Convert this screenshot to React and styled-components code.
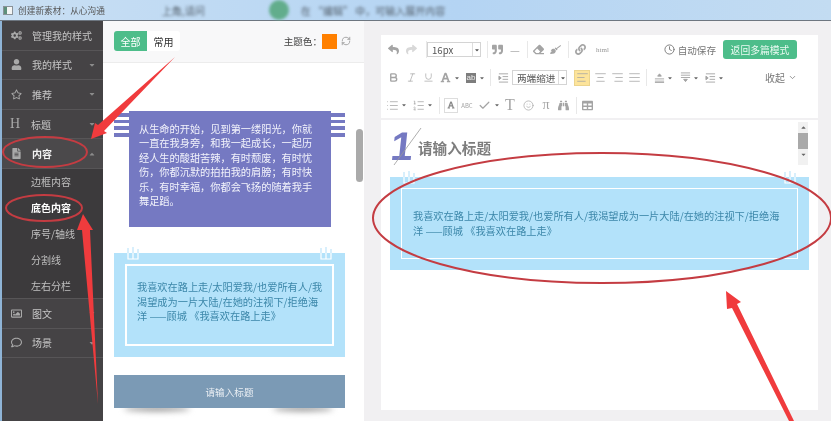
import React from "react";
import styled, { createGlobalStyle } from "styled-components";
import {
  FaCogs, FaUser, FaRegStar, FaFileAlt, FaRegImage, FaRegComment, FaCaretDown, FaCaretUp,
  FaReply, FaShare, FaQuoteRight, FaEraser, FaBroom, FaLink, FaFont, FaBinoculars, FaTable,
} from "react-icons/fa";
import {
  RefreshCw, Clock, ChevronDown, Bold, Italic, Underline, AlignLeft, AlignCenter, AlignRight,
  AlignJustify, List as ListIcon, ListOrdered, Check, Smile,
} from "lucide-react";

const Global = createGlobalStyle`
  html, body { margin: 0; padding: 0; background: #fff; }
  body { font-family: "Noto Sans CJK SC", "Liberation Sans", sans-serif; }
`;

const Page = styled.div`
  position: relative;
  width: 831px;
  height: 421px;
  overflow: hidden;
  display: flex;
  flex-direction: column;
  filter: blur(0.4px);
`;

const TitleBar = styled.div`
  height: 21px;
  box-sizing: border-box;
  flex: none;
  display: flex;
  align-items: center;
  padding-left: 3px;
  background: linear-gradient(90deg, #c9dff3, #b4d4f3 55%, #c3dcf2);
  border-bottom: 1px solid #6d7680;
  font-size: 8.7px;
  color: #555;
`;

const WindowIcon = styled.span`
  width: 8px;
  height: 7px;
  margin-right: 5px;
  background: linear-gradient(90deg, #5d8f7a 35%, #f3f5f5 35%);
  border: 1px solid #8a9299;
`;

const BlurText = styled.span`
  margin-left: ${(p) => p.$left}px;
  color: #54606c;
  font-size: 10px;
  filter: blur(1.4px);
  white-space: nowrap;
`;

const GreenDot = styled.span`
  width: 20px;
  height: 20px;
  margin-left: 64px;
  border-radius: 50%;
  background: #62ad8c;
  filter: blur(1.5px);
`;

const Body = styled.div`
  flex: 1;
  display: flex;
  min-height: 0;
  padding-left: 2px;
  background: #8fb4d6;
`;

const Sidebar = styled.div`
  width: 101px;
  flex: none;
  background: #454345;
  color: #c6c6c6;
  font-size: 10px;
`;

const MenuRow = styled.div`
  height: 29.6px;
  box-sizing: border-box;
  display: flex;
  align-items: center;
  padding-left: 8px;
  border-bottom: 1px solid #575557;
  background: ${(p) => (p.$active ? "#4b494b" : "transparent")};
  color: ${(p) => (p.$active ? "#f2f2f2" : "#c6c6c6")};
  font-weight: ${(p) => (p.$active ? 700 : 400)};
  svg.lead { width: 11px; height: 11px; flex: none; margin: 0 10px 0 1px; color: #a9a9a9; }
  svg.caret { width: 8px; height: 8px; margin-left: auto; margin-right: 7px; color: #8b8b8b; }
`;

const SerifLead = styled.span`
  width: 12px;
  margin-right: 9px;
  flex: none;
  font: 400 14px/14px "Liberation Serif", serif;
  color: #a9a9a9;
`;

const SubMenu = styled.div`
  background: #3c3a3c;
  box-shadow: inset 0 -1px 0 #575557;
`;

const SubRow = styled.div`
  height: 26px;
  display: flex;
  align-items: center;
  padding-left: 29px;
  color: ${(p) => (p.$active ? "#ffffff" : "#c0c0c0")};
  font-weight: ${(p) => (p.$active ? 700 : 400)};
`;

const Middle = styled.div`
  position: relative;
  isolation: isolate;
  width: 261px;
  flex: none;
  background: #fff;
  overflow: hidden;
`;

const MiddleHead = styled.div`
  height: 42px;
  box-sizing: border-box;
  display: flex;
  align-items: center;
  padding: 0 13px 1px 11px;
  background: #f8f8f9;
  border-bottom: 1px solid #ececec;
`;

const Tab = styled.div`
  width: 33px;
  height: 20px;
  display: flex;
  align-items: center;
  justify-content: center;
  font-size: 10px;
  color: ${(p) => (p.$on ? "#fff" : "#333")};
  background: ${(p) => (p.$on ? "#4dbd8a" : "#fff")};
  border-radius: ${(p) => (p.$on ? "3px 0 0 3px" : "0 3px 3px 0")};
`;

const ThemeLabel = styled.span`
  margin-left: auto;
  font-size: 9.6px;
  color: #444;
`;

const Swatch = styled.span`
  width: 15px;
  height: 15px;
  margin: 0 4px 0 0;
  background: #ff8000;
`;

const List = styled.div`
  padding: 48px 19px 0 11px;
  display: flex;
  flex-direction: column;
`;

const RibbonWrap = styled.div`
  position: relative;
  padding: 0 14px 0 15px;
  &::before {
    content: "";
    position: absolute;
    left: 0;
    right: 0;
    top: 2px;
    height: 24px;
    background: repeating-linear-gradient(180deg, #7579c2 0 3.7px, #fff 3.7px 6.7px);
  }
`;

const RibbonCard = styled.div`
  position: relative;
  height: 116px;
  box-sizing: border-box;
  padding: 11px 10px 0;
  background: #7579c2;
  color: #f2f3fb;
  font-size: 10.2px;
  line-height: 14.4px;
`;

const NoteCard = styled.div`
  position: relative;
  height: ${(p) => p.$h}px;
  margin-top: ${(p) => p.$top}px;
  box-sizing: border-box;
  padding: 11px;
  background: #b3e2fa;
`;

const NoteInner = styled.div`
  height: 100%;
  box-sizing: border-box;
  padding: ${(p) => p.$pad};
  border: ${(p) => p.$line}px solid #fff;
  color: #3c87a9;
  font-size: 10.2px;
  line-height: 14.6px;
`;

const Clip = styled.svg`
  position: absolute;
  top: -7px;
  ${(p) => (p.$side === "left" ? "left: 12px;" : "right: 12px;")}
  width: 14px;
  height: 19px;
`;

const TitleStrip = styled.div`
  position: relative;
  height: 33px;
  margin-top: 18px;
  display: flex;
  align-items: center;
  justify-content: center;
  background: #7b9ab5;
  color: #e9eef3;
  font-size: 9.6px;
  &::before, &::after {
    content: "";
    position: absolute;
    bottom: -3px;
    height: 5px;
    background: #8a8a8a;
    border-radius: 50%;
    filter: blur(3px);
    z-index: -1;
  }
  &::before { left: 10px; width: 66px; }
  &::after { right: 12px; width: 60px; }
`;

const ScrollThumb = styled.div`
  position: absolute;
  left: 253px;
  top: 108px;
  width: 7px;
  height: 53px;
  border-radius: 4px;
  background: #aaa;
`;

const Right = styled.div`
  flex: 1;
  min-width: 0;
  padding: 14px 13px 11px 17px;
  background: #f1f0f2;
`;

const Editor = styled.div`
  height: 100%;
  background: #fff;
  display: flex;
  flex-direction: column;
`;

const Toolbar = styled.div`
  height: 85px;
  flex: none;
  padding-top: 1px;
  box-sizing: border-box;
  border-bottom: 2px solid #f1f0f2;
`;

const ToolRow = styled.div`
  height: 27.7px;
  display: flex;
  align-items: center;
  padding-left: 3px;
`;

const Tool = styled.span`
  width: ${(p) => p.$w || 18}px;
  height: 16px;
  flex: none;
  margin-left: ${(p) => p.$ml || 0}px;
  display: flex;
  align-items: center;
  justify-content: center;
  color: ${(p) => (p.$light ? "#d8d8d8" : "#a4a4a4")};
  font-size: ${(p) => p.$size || 10}px;
  font-family: ${(p) => (p.$serif ? '"Liberation Serif", serif' : "inherit")};
  background: ${(p) => (p.$on ? "#fde49b" : "transparent")};
  box-shadow: ${(p) => (p.$on ? "inset 0 0 0 1px #ecd48d" : "none")};
  svg { width: ${(p) => p.$icon || 11}px; height: ${(p) => p.$icon || 11}px; }
`;

const Boxed = styled.span`
  width: 12px;
  height: 13px;
  display: flex;
  align-items: center;
  justify-content: center;
  border: 1px solid #ddd;
  color: #888;
  svg { width: 8px; height: 8px; }
`;

const Filled = styled.span`
  width: 10px;
  height: 10px;
  display: flex;
  align-items: center;
  justify-content: center;
  background: #7d7d7d;
  color: #eee;
  font: 400 8px/10px "Liberation Sans", sans-serif;
`;

const MiniCaret = styled(FaCaretDown)`
  width: 6px;
  height: 6px;
  flex: none;
  margin-left: ${(p) => p.$ml ?? 1}px;
  color: #666;
`;

const Sep = styled.span`
  width: 1px;
  height: 17px;
  flex: none;
  margin: 0 ${(p) => p.$r ?? 4}px 0 ${(p) => p.$l ?? 4}px;
  background: #e8e8e8;
`;

const Select = styled.span`
  width: ${(p) => p.$w}px;
  height: 15px;
  flex: none;
  margin-left: ${(p) => p.$ml || 0}px;
  display: flex;
  align-items: center;
  justify-content: space-between;
  box-sizing: border-box;
  padding-left: 4px;
  border: 1px solid #d4d4d4;
  font-size: 9.6px;
  color: #555;
`;

const SelectArrow = styled.span`
  width: 7px;
  height: 100%;
  display: flex;
  align-items: center;
  justify-content: center;
  border-left: 1px solid #ddd;
  svg { width: 6px; height: 6px; color: #555; }
`;

const Html = styled.span`
  margin-left: 9px;
  font-size: 7px;
  font-family: "Liberation Serif", serif;
  color: #999;
`;

const SaveLabel = styled.span`
  display: flex;
  align-items: center;
  gap: 3px;
  margin-left: auto;
  color: #777;
  font-size: 9.6px;
  svg { width: 11px; height: 11px; }
`;

const BackButton = styled.button`
  width: 74px;
  height: 19px;
  margin: 0 21px 0 7px;
  padding: 0;
  border: 0;
  border-radius: 3px;
  background: #4dbd8a;
  color: #eafaf2;
  font: 400 9.8px "Noto Sans CJK SC", sans-serif;
`;

const Collapse = styled.span`
  display: flex;
  align-items: center;
  gap: 3px;
  margin-left: auto;
  margin-right: 21px;
  font-size: 10px;
  color: #777;
  svg { width: 9px; height: 9px; }
`;

const Content = styled.div`
  position: relative;
  flex: 1;
  min-height: 0;
`;

const HeadingRow = styled.div`
  height: 57px;
  box-sizing: border-box;
  padding: 18px 0 0 37px;
  font-size: 14.6px;
  font-weight: 700;
  line-height: 20px;
  color: #7d7d7d;
`;

const NumberMark = styled.span`
  position: absolute;
  left: 10px;
  top: 6px;
  font: 700 40px/40px "Liberation Sans", sans-serif;
  transform: skewX(-6deg);
  color: #7579c2;
`;

const MarkLine = styled.svg`
  position: absolute;
  left: 12px;
  top: 7px;
  width: 30px;
  height: 39px;
`;

const EditorCard = styled(NoteCard)`
  margin: 0 9px;
`;

const EditorScroll = styled.div`
  position: absolute;
  left: 417px;
  top: 2px;
  width: 10px;
  height: 43px;
  background: #f1f1f1;
  display: flex;
  flex-direction: column;
  align-items: center;
  color: #666;
  svg { width: 7px; height: 7px; flex: none; margin-top: 2px; }
`;

const EditorThumb = styled.div`
  width: 10px;
  height: 16px;
  margin: 2px 0 0;
  background: #a9a9a9;
`;

const Annotations = styled.svg`
  position: absolute;
  left: 0;
  top: 0;
  width: 831px;
  height: 421px;
  pointer-events: none;
`;

const menuTop = [
  { icon: FaCogs, label: "管理我的样式" },
  { icon: FaUser, label: "我的样式", caret: true },
  { icon: FaRegStar, label: "推荐", caret: true },
  { label: "标题", caret: true, serif: "H" },
];

const menuSub = ["边框内容", "底色内容", "序号/轴线", "分割线", "左右分栏"];

const menuBottom = [
  { icon: FaRegImage, label: "图文" },
  { icon: FaRegComment, label: "场景" },
];

const poem = "我喜欢在路上走/太阳爱我/也爱所有人/我渴望成为一片大陆/在她的注视下/拒绝海洋 ——顾城 《我喜欢在路上走》";

const ClipMark = ({ side }) => (
  <Clip $side={side} viewBox="0 0 14 19" fill="none" strokeWidth="1.2">
    <path d="M2 7V2M7 7V1M12 7V3" stroke="#bfe5fa" />
    <path d="M2 7V13H12V7M7 7V13" stroke="#fff" />
  </Clip>
);

// line spacing and indent buttons: three rules and a small triangle
const SpacingIcon = ({ kind }) => (
  <svg viewBox="0 0 12 12" fill="none" stroke="currentColor" strokeWidth="1">
    {kind === "before" && <path d="M1 7.5H11M1 10H11M1 11.5H11" />}
    {kind === "before" && <path d="M4 4.5L6 2L8 4.5Z" fill="currentColor" />}
    {kind === "after" && <path d="M1 1H11M1 3.5H11M1 6H11" />}
    {kind === "after" && <path d="M4 8L6 10.5L8 8Z" fill="currentColor" />}
    {kind === "indent" && <path d="M1 2H11M5 5H11M5 8H11M1 11H11" />}
    {kind === "indent" && <path d="M1 4.5L3.5 6.5L1 8.5Z" fill="currentColor" />}
  </svg>
);

const MenuItem = ({ item }) => {
  const Icon = item.icon;
  return (
    <MenuRow>
      {Icon ? <Icon className="lead" /> : <SerifLead>{item.serif}</SerifLead>}
      {item.label}
      {item.caret && <FaCaretDown className="caret" />}
    </MenuRow>
  );
};

const App = () => {
  return (
    <>
      <Global />
      <Page>
        <TitleBar>
          <WindowIcon />
          创建新素材：从心沟通
          <BlurText $left={57}>上角,请问</BlurText>
          <GreenDot />
          <BlurText $left={12}>在 “编辑” 中，可输入展开内容</BlurText>
        </TitleBar>
        <Body>
          <Sidebar>
            {menuTop.map((m) => <MenuItem key={m.label} item={m} />)}
            <MenuRow $active>
              <FaFileAlt className="lead" />
              内容
              <FaCaretUp className="caret" />
            </MenuRow>
            <SubMenu>
              {menuSub.map((s) => <SubRow key={s} $active={s === "底色内容"}>{s}</SubRow>)}
            </SubMenu>
            {menuBottom.map((m) => <MenuItem key={m.label} item={{ ...m, caret: true }} />)}
          </Sidebar>

          <Middle>
            <MiddleHead>
              <Tab $on>全部</Tab>
              <Tab>常用</Tab>
              <ThemeLabel>主题色：</ThemeLabel>
              <Swatch />
              <RefreshCw size={10} color="#999" />
            </MiddleHead>
            <List>
              <RibbonWrap>
                <RibbonCard>从生命的开始，见到第一缕阳光，你就一直在我身旁，和我一起成长，一起历经人生的酸甜苦辣，有时颓废，有时忧伤，你都沉默的拍拍我的肩膀；有时快乐，有时幸福，你都会飞扬的随着我手舞足蹈。</RibbonCard>
              </RibbonWrap>
              <NoteCard $h={104} $top={26}>
                <ClipMark side="left" />
                <ClipMark side="right" />
                <NoteInner $line={2} $pad="14px 8px 0 10px">{poem}</NoteInner>
              </NoteCard>
              <TitleStrip>请输入标题</TitleStrip>
            </List>
            <ScrollThumb />
          </Middle>

          <Right>
            <Editor>
              <Toolbar>
                <ToolRow>
                  <Tool><FaReply /></Tool>
                  <Tool $light><FaShare /></Tool>
                  <Sep $l={6} $r={0} />
                  <Select $w={54}>16px<SelectArrow><FaCaretDown /></SelectArrow></Select>
                  <Sep $l={6} $r={0} />
                  <Tool><FaQuoteRight /></Tool>
                  <Tool $size={11}>—</Tool>
                  <Sep $l={3} $r={3} />
                  <Tool $w={14}><FaEraser /></Tool>
                  <Tool $w={20}><FaBroom /></Tool>
                  <Sep $l={3} $r={4} />
                  <Tool $w={14}><FaLink /></Tool>
                  <Html>html</Html>
                  <SaveLabel><Clock />自动保存</SaveLabel>
                  <BackButton>返回多篇模式</BackButton>
                </ToolRow>
                <ToolRow>
                  <Tool><Bold strokeWidth={3} /></Tool>
                  <Tool><Italic strokeWidth={1.5} /></Tool>
                  <Tool $w={16}><Underline strokeWidth={1.5} /></Tool>
                  <Tool><FaFont /></Tool>
                  <MiniCaret $ml={0} />
                  <Tool $w={16} $ml={3}><Filled>ab</Filled></Tool>
                  <MiniCaret $ml={0} />
                  <Sep $l={5} $r={5} />
                  <Tool $w={14}><SpacingIcon kind="indent" /></Tool>
                  <Select $w={55} $ml={2}>两端缩进<SelectArrow><FaCaretDown /></SelectArrow></Select>
                  <Tool $w={16} $ml={7} $on $icon={13}><AlignLeft strokeWidth={1.4} /></Tool>
                  <Tool $w={20} $icon={13}><AlignCenter strokeWidth={1.4} /></Tool>
                  <Tool $w={14} $icon={13}><AlignRight strokeWidth={1.4} /></Tool>
                  <Tool $w={20} $icon={13}><AlignJustify strokeWidth={1.4} /></Tool>
                  <Sep $l={2} $r={4} />
                  <Tool $w={16}><SpacingIcon kind="before" /></Tool>
                  <MiniCaret $ml={0} />
                  <Tool $w={16} $ml={4}><SpacingIcon kind="after" /></Tool>
                  <MiniCaret $ml={0} />
                  <Tool $w={16} $ml={3}><SpacingIcon kind="indent" /></Tool>
                  <MiniCaret $ml={0} />
                  <Collapse>收起<ChevronDown /></Collapse>
                </ToolRow>
                <ToolRow>
                  <Tool $w={16} $icon={13}><ListIcon strokeWidth={1.4} /></Tool>
                  <MiniCaret />
                  <Tool $w={16} $ml={3} $icon={13}><ListOrdered strokeWidth={1.4} /></Tool>
                  <MiniCaret />
                  <Sep $l={6} $r={4} />
                  <Tool $w={14}><Boxed><FaFont /></Boxed></Tool>
                  <Tool $w={18} $size={6}>ABC</Tool>
                  <Tool $w={16} $icon={13}><Check strokeWidth={2.2} /></Tool>
                  <MiniCaret $ml={2} />
                  <Tool $w={20} $size={16} $serif>T</Tool>
                  <Tool $w={16}><Smile strokeWidth={1.5} /></Tool>
                  <Tool $w={20} $size={14} $serif>π</Tool>
                  <Tool $w={14}><FaBinoculars /></Tool>
                  <Sep $l={6} $r={3} />
                  <Tool $w={14}><FaTable /></Tool>
                </ToolRow>
              </Toolbar>
              <Content>
                <NumberMark>1</NumberMark>
                <MarkLine viewBox="0 0 30 39" fill="none" stroke="#999" strokeWidth="0.8">
                  <path d="M1 38L28 1" />
                </MarkLine>
                <HeadingRow>请输入标题</HeadingRow>
                <EditorCard $h={93} $top={0}>
                  <ClipMark side="left" />
                  <ClipMark side="right" />
                  <NoteInner $line={1} $pad="20px 8px 0 11px">{poem}</NoteInner>
                </EditorCard>
                <EditorScroll>
                  <FaCaretUp />
                  <EditorThumb />
                  <FaCaretDown />
                </EditorScroll>
              </Content>
            </Editor>
          </Right>
        </Body>

        <Annotations viewBox="0 0 831 421">
          <g fill="none" stroke="#c43c42" strokeWidth="2">
            <ellipse cx="45" cy="152" rx="42" ry="15" />
            <ellipse cx="44" cy="208" rx="38" ry="13" />
            <ellipse cx="602" cy="218" rx="229" ry="65" />
          </g>
          <g fill="#f03b3d">
            <polygon points="175,57 104,131 107,133 91,139 95,123 98,125" />
            <polygon points="83,214 93,230 90,230 98,404 82,230 77,230" />
            <polygon points="726,291 741,302 737,304 794,421 789,421 732,308 727,309" />
          </g>
        </Annotations>
      </Page>
    </>
  );
};

export default App;
